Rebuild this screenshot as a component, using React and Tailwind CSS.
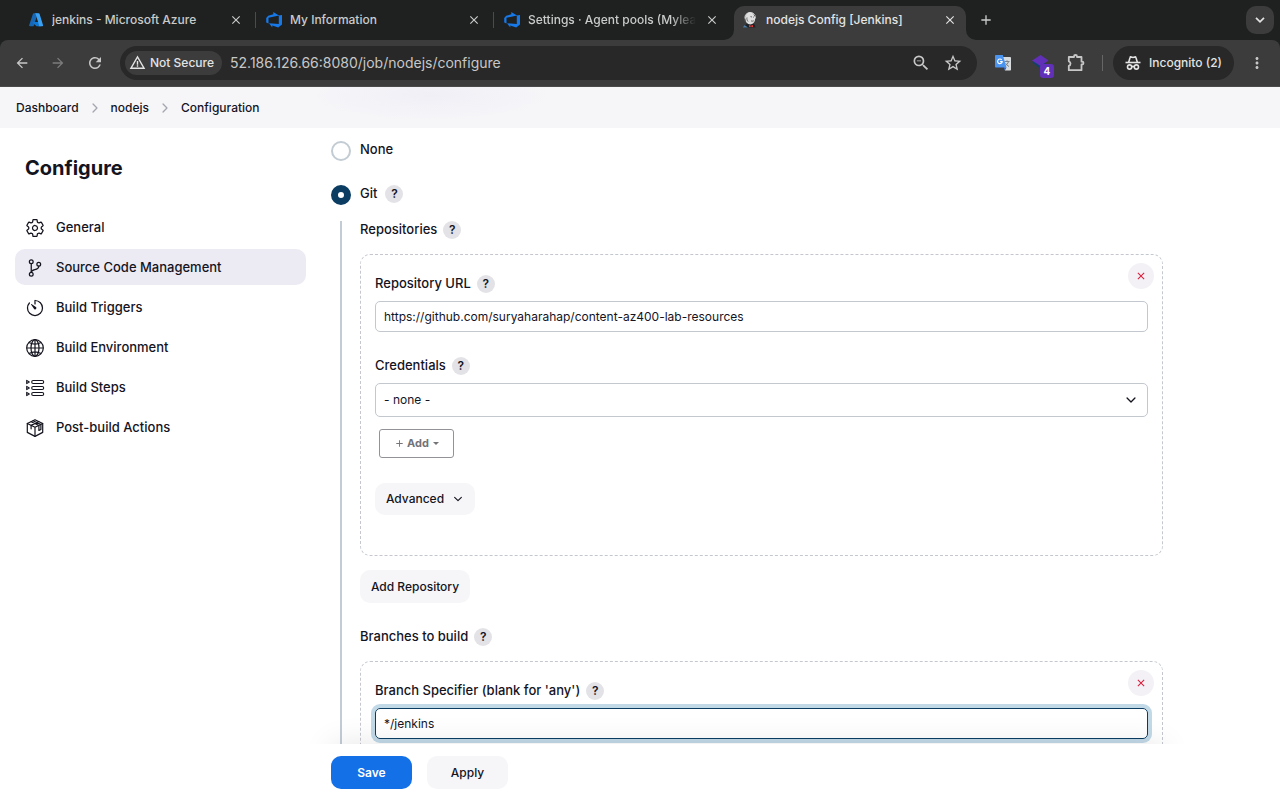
import { useState } from "react";
import {
  IoChevronDown,
  IoChevronForward,
  IoGitBranchOutline,
  IoSettingsOutline,
  IoTimerOutline,
} from "react-icons/io5";
import {
  MdAdd,
  MdArrowBack,
  MdArrowForward,
  MdClose,
  MdMoreVert,
  MdOutlineZoomOut,
  MdRefresh,
  MdStarBorder,
  MdWarningAmber,
} from "react-icons/md";

function AzureIcon() {
  return (
    <svg viewBox="0 0 16 16" className="w-4 h-4 shrink-0">
      <path d="M5.8 1.2h4L5.6 14.3H2.2a1 1 0 0 1-1-1.3L4.9 1.9a1 1 0 0 1 .9-.7z" fill="#1767b5" />
      <path d="M11.6 10H5.2l-.6.8 4 3.5h4.3z" fill="#0f78d4" />
      <path d="M6.8 1.2h3.9a1 1 0 0 1 .9.7L15 13a1 1 0 0 1-1 1.3h-3.6a1 1 0 0 0 .6-1.3L7.6 1.9a1 1 0 0 0-.8-.7z" fill="#3aa0f2" />
    </svg>
  );
}

function DevOpsIcon() {
  return (
    <svg viewBox="0 0 16 16" className="w-4 h-4 shrink-0">
      <path
        d="M16 3.1v9.4l-3.8 3.1-5.9-2.1v2.1L3 11.2l9.8.8V3.6zM12.9 3.6 7.3 0v2.3L2.2 3.8.2 6v4.6l2.3 1V5.8z"
        fill="#1778e8"
      />
    </svg>
  );
}

function JenkinsIcon() {
  return (
    <svg viewBox="0 0 16 16" className="w-4 h-4 shrink-0">
      <path d="M2 15.500c.5-2.500 2-3.800 5-4l5 .5c1 1 1.300 2 1.300 3.500z" fill="#1f2226" />
      <path d="M1.200 15.500c0-1 .7-1.800 1.700-2.200l3 2.200z" fill="#4d7ea8" />
      <ellipse cx="8.200" cy="6.500" rx="5" ry="5.900" fill="#dedede" />
      <path d="M3.400 7.500C2 3 5 .6 8.300.6c3.400 0 5.300 2.600 4.900 5.800" stroke="#f4f4f4" fill="none" />
      <path d="M8.500 4.600 10 5m1.200 0 .8.300M9 8.800c1.200.6 2.200.4 2.800-.2M5 5.500c-.4 1.500.2 3 1 4M3 6.500v3M12 2.500l1 2" stroke="#555" fill="none" strokeWidth=".9" />
      <path d="m7 12.900 2 .9 2-.9v2.400l-2-.8-2 .8z" fill="#e23b3b" />
    </svg>
  );
}

function TranslateIcon() {
  return (
    <svg viewBox="0 0 18 18" className="w-[18px] h-[18px]">
      <path d="M8 3h8.200c.5 0 .8.300.8.800v12c0 .5-.3.800-.8.800H11z" fill="#d9dcdf" />
      <path d="M10.500 7.500h5M13 6.300v1.200M14.500 7.600c-.6 2-1.800 3.200-3 4M11.700 9.300c.8 1.500 2 2.600 3.300 3.200" stroke="#7c8186" fill="none" />
      <path d="M1.800 1h7l3.700 12.500H1.800a.8.800 0 0 1-.8-.8V1.800c0-.5.3-.8.800-.8z" fill="#4a94f0" />
      <path d="M7.700 5.900A2.300 2.300 0 1 0 8.200 7.600H6.100" stroke="#fff" fill="none" strokeWidth="1.100" />
      <path d="m11 16.600-1.400-3.100h2.900z" fill="#2a62c4" />
    </svg>
  );
}

function PuzzleIcon() {
  return (
    <svg viewBox="0 0 20 20" className="w-5 h-5" fill="none" stroke="currentColor" strokeWidth="1.800">
      <path d="M2.800 4H8v-.5a1.500 1.500 0 0 1 3 0V4h4.500v4.700h.6a1.400 1.400 0 0 1 0 2.800h-.6v5.700H2.800v-4.300a2.400 2.400 0 0 0 0-4.600z" strokeLinejoin="round" />
    </svg>
  );
}

function IncognitoIcon() {
  return (
    <svg viewBox="0 0 16 16" className="w-4 h-4" fill="none" stroke="currentColor" strokeWidth="1.600">
      <path d="M.5 7.500h15" />
      <path d="m3.700 7.200 1.400-4.800c.1-.4.500-.6.900-.5l2 .6 2-.6c.4-.1.800.1.900.5l1.400 4.800" />
      <circle cx="4.600" cy="12" r="2.100" />
      <circle cx="11.400" cy="12" r="2.100" />
      <path d="M6.700 11.800c.8-.6 1.800-.6 2.600 0" />
    </svg>
  );
}

function GlobeIcon() {
  return (
    <svg viewBox="0 0 20 20" className="w-5 h-5" fill="none" stroke="currentColor" strokeWidth="1.200">
      <circle cx="10" cy="10" r="8.300" />
      <ellipse cx="10" cy="10" rx="4" ry="8.300" />
      <path d="M10 1.700v16.600M1.700 10h16.600M4 4.500c3.500 2 8.500 2 12 0M4 15.500c3.500-2 8.500-2 12 0" />
    </svg>
  );
}

function StepsIcon() {
  return (
    <svg viewBox="0 0 20 20" className="w-5 h-5" fill="none" stroke="currentColor" strokeWidth="1.100">
      {[4, 10, 16].map((y) => (
        <g key={y}>
          <path d={`M1.700 ${y - 1.600}v3.200l2.600-1.600z`} strokeLinejoin="round" />
          <rect x="6.700" y={y - 1.500} width="12" height="3" rx="1.500" />
        </g>
      ))}
    </svg>
  );
}

function PackageIcon() {
  return (
    <svg viewBox="0 0 20 20" className="w-5 h-5" fill="none" stroke="currentColor" strokeWidth="1.200" strokeLinejoin="round" strokeLinecap="round">
      <path d="M10 1.700 2.300 5.500v8.900l7.700 4 7.700-4V5.500z" />
      <path d="M2.300 5.500 10 9.300l7.700-3.800M10 9.300v9.100" />
      <path d="m6.200 3.700 7.700 3.800v5l2-1V6.500L8.100 2.700M13.800 3.600 6.100 7.400v3.400" />
    </svg>
  );
}

const tabs = [
  { title: "jenkins - Microsoft Azure", icon: AzureIcon },
  { title: "My Information", icon: DevOpsIcon },
  { title: "Settings · Agent pools (Mylea", icon: DevOpsIcon, fade: true },
];

const sections = [
  { label: "General", icon: <IoSettingsOutline size={20} /> },
  { label: "Source Code Management", icon: <IoGitBranchOutline size={20} />, active: true },
  { label: "Build Triggers", icon: <IoTimerOutline size={20} /> },
  { label: "Build Environment", icon: <GlobeIcon /> },
  { label: "Build Steps", icon: <StepsIcon /> },
  { label: "Post-build Actions", icon: <PackageIcon /> },
];

function TabStrip() {
  return (
    <div className="flex items-start h-10 pl-[18px] pr-1.5 text-xs font-medium text-[#c9cbca]">
      {tabs.map(({ title, icon: Icon, fade }, index) => (
        <div key={title} className="flex items-center w-[238px] min-w-0 h-10 pl-2.5">
          <Icon />
          <span
            className={`flex-1 min-w-0 ml-2 mr-2 overflow-hidden whitespace-nowrap ${
              fade ? "[mask-image:linear-gradient(to_right,black_85%,transparent)]" : ""
            }`}
          >
            {title}
          </span>
          <button aria-label="Close tab" className="flex justify-center w-4 mr-[11px]">
            <MdClose size={14} />
          </button>
          <span className={`w-px h-4 ${index < 2 ? "bg-[#4a4c4b]" : ""}`} />
        </div>
      ))}
      <div className="relative flex items-center w-[232px] min-w-0 h-[34px] mt-1.5 ml-0.5 px-2 pb-1.5 rounded-t-[10px] bg-[#3c3c3c] text-[#e3e3e3]">
        <svg viewBox="0 0 10 10" className="absolute bottom-0 -left-2.5 w-2.5 h-2.5">
          <path d="M10 0v10H0A10 10 0 0 0 10 0z" fill="#3c3c3c" />
        </svg>
        <svg viewBox="0 0 10 10" className="absolute bottom-0 -right-2.5 w-2.5 h-2.5">
          <path d="M0 0v10h10A10 10 0 0 1 0 0z" fill="#3c3c3c" />
        </svg>
        <JenkinsIcon />
        <span className="flex-1 min-w-0 ml-2 overflow-hidden whitespace-nowrap">
          nodejs Config [Jenkins]
        </span>
        <button aria-label="Close tab" className="flex justify-center w-4">
          <MdClose size={14} />
        </button>
      </div>
      <button aria-label="New tab" className="flex items-center h-10 ml-3">
        <MdAdd size={16} />
      </button>
      <button
        aria-label="Search tabs"
        className="flex items-center justify-center w-7 h-7 mt-1.5 ml-auto rounded-[10px] bg-[#3c3c3c] text-[#e3e3e3]"
      >
        <svg viewBox="0 0 10 6" className="w-2.5 h-1.5" fill="none" stroke="currentColor" strokeWidth="1.700">
          <path d="m1 .8 4 4 4-4" />
        </svg>
      </button>
    </div>
  );
}

function Toolbar() {
  return (
    <div className="flex items-center h-[47px] px-3.5 pb-px rounded-t-lg border-b border-[#4a4a4a] bg-[#3c3c3c] text-[#c7c7c7]">
      <div className="flex gap-5 shrink-0">
        <button aria-label="Back"><MdArrowBack size={16} /></button>
        <button aria-label="Forward" className="text-[#7c7c7c]"><MdArrowForward size={16} /></button>
        <button aria-label="Reload"><MdRefresh size={18} /></button>
      </div>
      <div className="flex flex-1 items-center min-w-0 h-[34px] ml-4 pl-[5px] pr-3.5 rounded-full bg-[#282828]">
        <button className="flex items-center gap-1 h-6 px-1 pr-2 rounded-full bg-[#3c3c3c] text-xs font-medium text-[#e3e3e3] whitespace-nowrap">
          <MdWarningAmber size={17} />
          Not Secure
        </button>
        <input
          aria-label="Address"
          className="flex-1 min-w-0 ml-2 bg-transparent text-sm text-[#c7c7c7] outline-none"
          defaultValue="52.186.126.66:8080/job/nodejs/configure"
        />
        <MdOutlineZoomOut size={20} className="shrink-0" />
        <MdStarBorder size={20} className="ml-3 shrink-0" />
      </div>
      <div className="flex items-center shrink-0 ml-[17px]">
        <TranslateIcon />
        <div className="relative ml-5 w-[22px] h-[22px]">
          <svg viewBox="0 0 22 22" className="w-[22px] h-[22px]">
            <path d="m0 10 8 6.500 6-3V7z" fill="#10436b" />
            <path d="m8.500 3 8 5.500-8 5.500L0 8.500z" fill="#6030b8" />
          </svg>
          <span className="absolute right-0 -bottom-1 w-3.5 h-3.5 rounded-[3px] bg-[#6030b8] text-center text-[10px] leading-[14px] font-bold text-white">
            4
          </span>
        </div>
        <button aria-label="Extensions" className="ml-3"><PuzzleIcon /></button>
        <span className="w-px h-4 ml-4 bg-[#666]" />
        <button className="flex items-center gap-2 h-[34px] ml-2.5 px-3 rounded-full bg-[#282828] text-xs font-medium text-[#e3e3e3]">
          <IncognitoIcon />
          Incognito (2)
        </button>
        <button aria-label="Menu" className="ml-3.5"><MdMoreVert size={18} /></button>
      </div>
    </div>
  );
}

function Breadcrumbs() {
  return (
    <nav
      aria-label="Breadcrumb"
      className="flex items-center shrink-0 h-[41px] pl-4 text-xs font-medium bg-[#f6f6f9] bg-[radial-gradient(ellipse_120px_26px_at_430px_8px,#f0eff6,#f6f6f9)]"
    >
      <a href="#dashboard">Dashboard</a>
      <IoChevronForward size={14} className="mx-[9px] text-[#a5a5b0]" />
      <a href="#nodejs">nodejs</a>
      <IoChevronForward size={14} className="mx-[9px] text-[#a5a5b0]" />
      <a href="#configuration">Configuration</a>
    </nav>
  );
}

function Sidebar() {
  return (
    <aside className="w-[306px] shrink-0 pt-6 pl-[15px]">
      <h1 className="pl-2.5 text-xl leading-8 font-bold">Configure</h1>
      <nav className="flex flex-col gap-1 mt-[25px]">
        {sections.map((section) => (
          <a
            key={section.label}
            href="#section"
            className={`flex items-center gap-[11px] h-9 pt-px px-2.5 rounded-[10px] text-[13px] font-medium ${
              section.active ? "bg-[#ecebf4]" : ""
            }`}
          >
            {section.icon}
            {section.label}
          </a>
        ))}
      </nav>
    </aside>
  );
}

function Help({ topic }) {
  return (
    <button
      type="button"
      aria-label={`Help for ${topic}`}
      className="w-[18px] h-[18px] rounded-full bg-[#e3e3e7] text-xs leading-[18px] font-semibold"
    >
      ?
    </button>
  );
}

function FieldLabel({ id, children }) {
  return (
    <div className="flex items-center gap-1.5 h-[18px] text-[13px] font-medium">
      {id ? <label htmlFor={id}>{children}</label> : <span>{children}</span>}
      <Help topic={children} />
    </div>
  );
}

function Chunk({ children, className = "" }) {
  return (
    <div
      className={`relative mt-[15px] px-3.5 pt-5 border border-dashed border-[#c4c8ce] rounded-[10px] ${className}`}
    >
      <button
        type="button"
        aria-label="Delete"
        className="absolute top-2 right-2 flex items-center justify-center w-[26px] h-[26px] rounded-full bg-[#f3f1f5] text-[#dc1b3a]"
      >
        <MdClose size={12} />
      </button>
      {children}
    </div>
  );
}

function ScmForm() {
  const [scm, setScm] = useState("git");
  const radio =
    "appearance-none w-5 h-5 mt-0.5 rounded-full border-2 border-[#c3ccd3] bg-white checked:border-[7px] checked:border-[#0b3d63]";

  return (
    <form className="flex-1 min-w-0 max-w-[832px] pt-2.5">
      <div className="flex items-center h-6 text-[13px] font-medium">
        <input
          id="scm-none"
          type="radio"
          name="scm"
          className={radio}
          checked={scm === "none"}
          onChange={() => setScm("none")}
        />
        <label htmlFor="scm-none" className="ml-[9px]">None</label>
      </div>
      <div className="flex items-center h-6 mt-5 text-[13px] font-medium">
        <input
          id="scm-git"
          type="radio"
          name="scm"
          className={radio}
          checked={scm === "git"}
          onChange={() => setScm("git")}
        />
        <label htmlFor="scm-git" className="ml-[9px] mr-2">Git</label>
        <Help topic="Git" />
      </div>

      <div className="mt-[15px] ml-[9px] pl-[18px] border-l-2 border-[#c3ccd3]">
        <FieldLabel>Repositories</FieldLabel>
        <Chunk className="pb-10">
          <FieldLabel id="repo-url">Repository URL</FieldLabel>
          <input
            id="repo-url"
            className="block w-full h-[31px] mt-2 px-2 border border-[#c3c7ce] rounded-[5px] text-xs outline-none"
            defaultValue="https://github.com/suryaharahap/content-az400-lab-resources"
          />
          <div className="mt-[25px]">
            <FieldLabel id="credentials">Credentials</FieldLabel>
          </div>
          <div className="relative mt-2">
            <select
              id="credentials"
              className="block appearance-none w-full h-[34px] px-2 border border-[#c3c7ce] rounded-[5px] bg-white text-xs outline-none"
            >
              <option>- none -</option>
            </select>
            <IoChevronDown size={14} className="absolute top-2.5 right-2.5 pointer-events-none" />
          </div>
          <button
            type="button"
            className="flex items-center justify-center w-[75px] h-[29px] mt-3 ml-1 border border-[#929297] rounded-[3px] text-[11px] font-bold text-[#737378]"
          >
            <MdAdd size={11} className="mr-0.5" />
            Add
            <span className="ml-1 border-x-[3px] border-t-[3px] border-x-transparent border-t-[#737378]" />
          </button>
          <button
            type="button"
            className="flex items-center justify-center gap-2 w-[100px] h-8 mt-[25px] rounded-[10px] bg-[#f6f6f8] text-xs font-medium"
          >
            Advanced
            <IoChevronDown size={12} />
          </button>
        </Chunk>
        <button
          type="button"
          className="w-[110px] h-[33px] mt-3.5 mb-[25px] rounded-[10px] bg-[#f6f6f8] text-xs font-medium"
        >
          Add Repository
        </button>
        <FieldLabel>Branches to build</FieldLabel>
        <Chunk className="pb-16">
          <FieldLabel id="branch">Branch Specifier (blank for 'any')</FieldLabel>
          <input
            id="branch"
            className="block w-full h-[31px] mt-2 px-2 border border-[#0b3d63] rounded-[5px] text-xs outline-none ring-4 ring-[#c2d9e8]"
            defaultValue="*/jenkins"
          />
        </Chunk>
      </div>
    </form>
  );
}

export default function App() {
  return (
    <div className="flex flex-col h-screen overflow-hidden bg-white font-['Inter','Liberation_Sans',sans-serif] text-[#14141f]">
      <header className="shrink-0 bg-[#1f2121]">
        <TabStrip />
        <Toolbar />
      </header>
      <Breadcrumbs />
      <main className="flex flex-1 gap-[25px] min-h-0 pr-6 overflow-y-auto [scrollbar-width:none]">
        <Sidebar />
        <ScmForm />
      </main>
      <footer className="relative z-10 shrink-0 pl-[331px] pr-6">
        <div className="max-w-[832px] shadow-[0_0_30px_rgba(0,0,0,0.1)]">
          <div className="relative flex gap-[15px] h-14 pt-3 before:absolute before:inset-y-0 before:-left-20 before:-right-28 before:bg-white">
            <button className="relative w-[81px] h-[33px] rounded-[10px] bg-[#1470e6] text-xs font-semibold text-white">
              Save
            </button>
            <button className="relative w-[81px] h-[33px] rounded-[10px] bg-[#f6f5f8] text-xs font-medium">
              Apply
            </button>
          </div>
        </div>
      </footer>
    </div>
  );
}
